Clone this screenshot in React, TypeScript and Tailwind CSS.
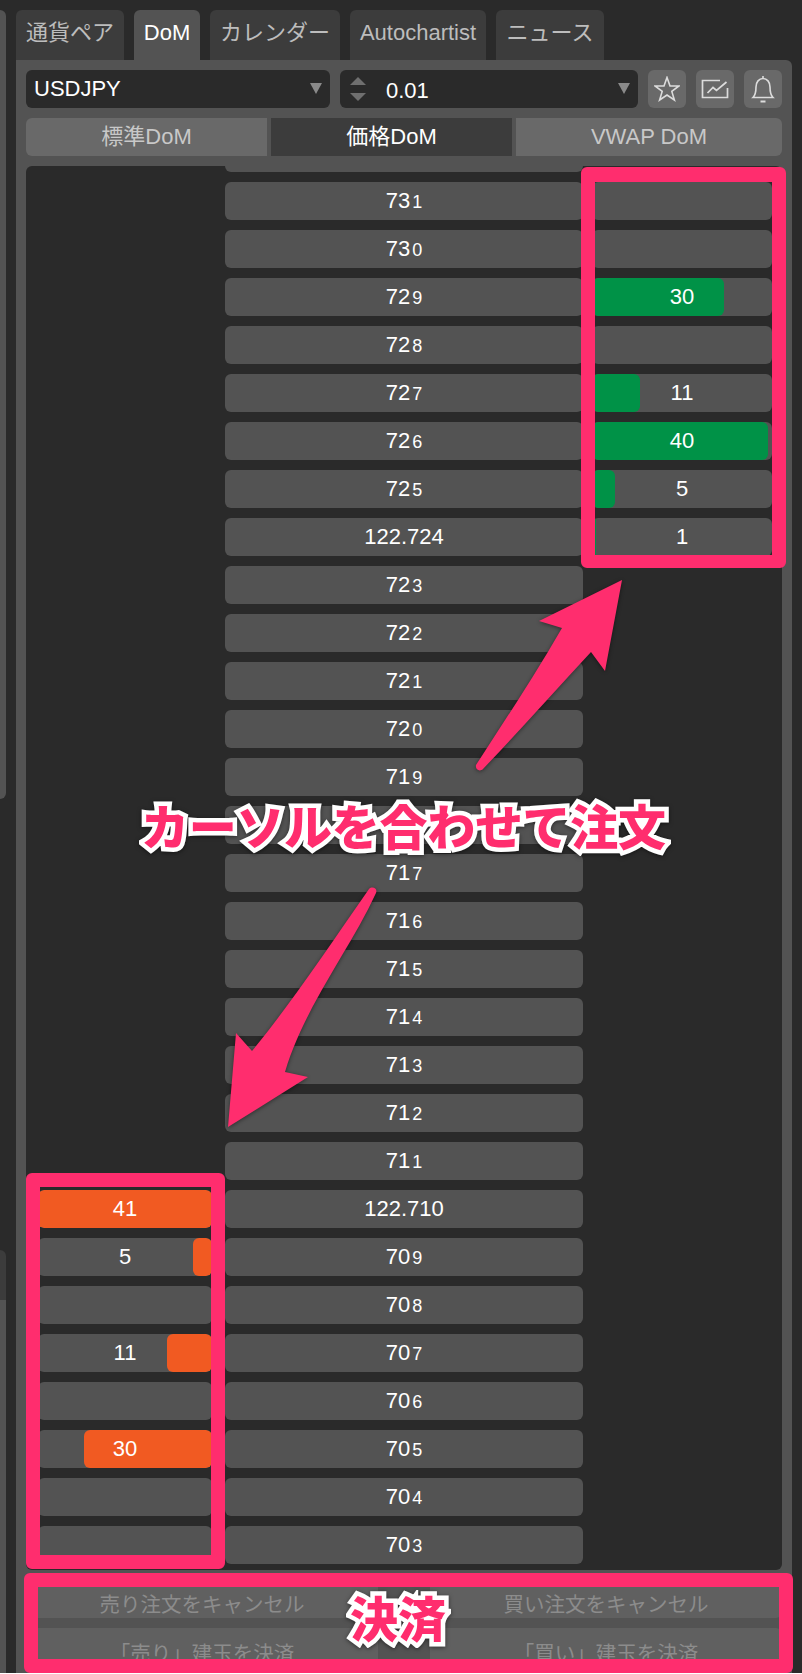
import React from 'react';

// --- DATA ---
const FIRST_PRICE = 732; // only its bottom edge shows, the label is scrolled away
const LAST_PRICE = 703;

// sizes shown in the buy column (green, grows from the left)
const BUY_SIZES: Record<number, { size?: number; bar?: number }> = {
  731: {},
  730: {},
  729: { size: 30, bar: 132 },
  728: {},
  727: { size: 11, bar: 48 },
  726: { size: 40, bar: 176 },
  725: { size: 5, bar: 23 },
  724: { size: 1, bar: 4 },
};

// sizes shown in the sell column (orange, grows from the right)
const SELL_SIZES: Record<number, { size?: number; bar?: number }> = {
  710: { size: 41, bar: 174 },
  709: { size: 5, bar: 19 },
  708: {},
  707: { size: 11, bar: 45 },
  706: {},
  705: { size: 30, bar: 128 },
  704: {},
  703: {},
};

const FULL_PRICES = [724, 710];

const prices: number[] = [];
for (let p = FIRST_PRICE; p >= LAST_PRICE; p--) prices.push(p);

const TABS = [
  { label: '通貨ペア', width: 'w-[108px]', active: false },
  { label: 'DoM', width: 'w-[66px]', active: true },
  { label: 'カレンダー', width: 'w-[130px]', active: false },
  { label: 'Autochartist', width: 'w-[136px]', active: false },
  { label: 'ニュース', width: 'w-[108px]', active: false },
];

// --- ICONS ---
const Triangle = ({ down = true, className }: { down?: boolean; className: string }) => (
  <svg viewBox="0 0 12 11" preserveAspectRatio="none" className={className}>
    <polygon points={down ? '0,0 12,0 6,11' : '6,0 12,11 0,11'} fill="currentColor" />
  </svg>
);

const StarIcon = () => (
  <svg viewBox="0 0 26 26" className="w-[26px] h-[26px] text-[#dcdcdc]" fill="none" stroke="currentColor" strokeWidth="1.6">
    <polygon points="13,1.5 16,10 25,10 17.8,15.4 20.4,24 13,19 5.6,24 8.2,15.4 1,10 10,10" strokeLinejoin="miter" />
  </svg>
);

const ChartIcon = () => (
  <svg viewBox="0 0 28 20" className="w-[28px] h-[20px] text-[#dcdcdc]" fill="none" stroke="currentColor" strokeWidth="1.7">
    <path d="M19 1.5H1.5V18.5H26.5V9" />
    <path d="M6.5 14L12 8.5L15.5 11.5L25.5 3" />
  </svg>
);

const BellIcon = () => (
  <svg viewBox="0 0 24 28" className="w-[24px] h-[28px] text-[#dcdcdc]" fill="none" stroke="currentColor" strokeWidth="1.6">
    <path d="M12 1V3.5" />
    <path d="M2 22.5C4.5 20 5 18 5 12C5 7 8 3.5 12 3.5C16 3.5 19 7 19 12C19 18 19.5 20 22 22.5Z" />
    <path d="M9.5 26.5H14.5" strokeWidth="2" />
  </svg>
);

// --- ROWS ---
const PriceLabel = ({ price }: { price: number }) => {
  if (price === FIRST_PRICE) return null;
  if (FULL_PRICES.includes(price)) return <span>122.{price}</span>;
  const text = String(price);
  return (
    <span>
      {text.slice(0, 2)}
      <span className="ml-[2px] text-[18px]">{text.slice(2)}</span>
    </span>
  );
};

const SizeCell = ({ cell, side }: { cell: { size?: number; bar?: number }; side: 'buy' | 'sell' }) => (
  <div className="relative h-[38px] rounded-[6px] bg-[#535353] overflow-hidden flex items-center justify-center text-white">
    {cell.bar ? (
      <div
        className={side === 'buy' ? 'absolute left-0 top-0 bottom-0 rounded-[6px] bg-[#009247]' : 'absolute right-0 top-0 bottom-0 rounded-[6px] bg-[#f15a22]'}
        style={{ width: cell.bar }}
      />
    ) : null}
    <span className="relative">{cell.size}</span>
  </div>
);

const LadderRow = ({ price }: { price: number }) => (
  <div className="flex h-[38px] shrink-0">
    <div className="w-[174px]">{SELL_SIZES[price] && <SizeCell cell={SELL_SIZES[price]} side="sell" />}</div>
    <div className="ml-[13px] w-[358px] h-[38px] rounded-[6px] bg-[#535353] flex items-center justify-center text-white">
      <PriceLabel price={price} />
    </div>
    <div className="ml-[9px] w-[180px]">{BUY_SIZES[price] && <SizeCell cell={BUY_SIZES[price]} side="buy" />}</div>
  </div>
);

const ANNOTATION_TEXT =
  "absolute font-black text-[#ff2d6e] whitespace-nowrap [-webkit-text-stroke:9px_white] [paint-order:stroke_fill] [filter:drop-shadow(0_1px_2px_rgba(0,0,0,0.5))]";

// --- PAGE ---
export default function App() {
  return (
    <div className="relative w-[802px] h-[1673px] bg-[#2a2a2a] overflow-hidden flex text-[22px] leading-none text-white font-['Liberation_Sans','Noto_Sans_CJK_JP',sans-serif]">
      {/* neighbouring panels peeking in on the left */}
      <div className="w-[6px] mr-[10px] pt-[10px] flex flex-col shrink-0">
        <div className="h-[789px] rounded-r-[6px] bg-[#535353]" />
        <div className="mt-[451px] h-[50px] rounded-tr-[6px] bg-[#3c3c3c]" />
        <div className="flex-1 bg-[#535353]" />
      </div>

      <div className="w-[776px] pt-[10px] flex flex-col">
        {/* tabs */}
        <div className="flex gap-[10px] h-[50px] shrink-0">
          {TABS.map(tab => (
            <div
              key={tab.label}
              className={`${tab.width} rounded-t-[6px] flex items-center justify-center pb-[4px] ${tab.active ? 'bg-[#535353] text-white' : 'bg-[#3c3c3c] text-[#bdbdbd]'}`}
            >
              {tab.label}
            </div>
          ))}
        </div>

        <div className="flex-1 min-h-0 bg-[#535353] rounded-tr-[6px] pt-[10px] px-[10px] flex flex-col">
          {/* symbol + step */}
          <div className="flex h-[38px] shrink-0">
            <div className="w-[304px] rounded-[6px] bg-[#2a2a2a] pl-[8px] pr-[8px] flex items-center justify-between">
              <span>USDJPY</span>
              <Triangle className="w-[12px] h-[11px] text-[#8a8a8a] -mt-[2px]" />
            </div>
            <div className="ml-[10px] w-[298px] rounded-[6px] bg-[#2a2a2a] pl-[10px] pr-[8px] flex items-center">
              <div className="flex flex-col gap-[8px] w-[16px]">
                <Triangle down={false} className="w-[16px] h-[8px] text-[#6f6f6f]" />
                <Triangle className="w-[16px] h-[8px] text-[#6f6f6f]" />
              </div>
              <span className="ml-[20px] mt-[3px]">0.01</span>
              <Triangle className="ml-auto w-[12px] h-[11px] text-[#8a8a8a] -mt-[2px]" />
            </div>
            <div className="ml-[10px] w-[38px] rounded-[6px] bg-[#696969] flex items-center justify-center"><StarIcon /></div>
            <div className="ml-[10px] w-[38px] rounded-[6px] bg-[#696969] flex items-center justify-center"><ChartIcon /></div>
            <div className="ml-[10px] w-[38px] rounded-[6px] bg-[#696969] flex items-center justify-center"><BellIcon /></div>
          </div>

          {/* DoM type */}
          <div className="mt-[10px] flex gap-[4px] h-[38px] shrink-0">
            <div className="w-[241px] rounded-l-[6px] bg-[#696969] text-[#c8c8c8] flex items-center justify-center">標準DoM</div>
            <div className="w-[241px] bg-[#3c3c3c] text-white flex items-center justify-center">価格DoM</div>
            <div className="w-[266px] rounded-r-[6px] bg-[#696969] text-[#c8c8c8] flex items-center justify-center">VWAP DoM</div>
          </div>

          {/* ladder */}
          <div className="mt-[10px] h-[1404px] shrink-0 rounded-[6px] bg-[#2a2a2a] overflow-hidden pl-[12px]">
            <div className="-mt-[32px] flex flex-col gap-[10px]">
              {prices.map(price => (
                <LadderRow key={price} price={price} />
              ))}
            </div>
          </div>

          {/* footer buttons */}
          <div className="mt-[10px] grid grid-cols-2 gap-x-[52px] gap-y-[10px] text-[20.5px] text-[#8c8c8c]">
            <div className="h-[38px] rounded-[6px] bg-[#606060] flex justify-center pt-[15px] overflow-hidden">売り注文をキャンセル</div>
            <div className="h-[38px] rounded-[6px] bg-[#606060] flex justify-center pt-[15px] overflow-hidden">買い注文をキャンセル</div>
            <div className="h-[45px] rounded-[6px] bg-[#606060] flex justify-center pt-[16px]">「売り」建玉を決済</div>
            <div className="h-[45px] rounded-[6px] bg-[#606060] flex justify-center pt-[16px]">「買い」建玉を決済</div>
          </div>
        </div>
      </div>

      {/* annotation frames */}
      <div className="absolute left-[581px] top-[167px] w-[205px] h-[401px] rounded-[6px] border-x-[14px] border-t-[15px] border-b-[13px] border-[#ff2d6e]" />
      <div className="absolute left-[26px] top-[1173px] w-[199px] h-[396px] rounded-[6px] border-[14px] border-[#ff2d6e]" />
      <div className="absolute left-[24px] top-[1573px] w-[769px] h-[100px] rounded-[6px] border-[14px] border-[#ff2d6e]" />

      {/* annotation arrows */}
      <svg className="absolute left-0 top-0 w-[802px] h-[1673px] pointer-events-none [filter:drop-shadow(0_1px_2px_rgba(0,0,0,0.45))]" viewBox="0 0 802 1673">
        <path
          d="M622 580L605 671L591 652C556 690 520 730 483 769C480 772 475 770 476 765C505 720 535 675 562 628L539 621Z"
          fill="#ff2d6e"
        />
        <path
          d="M376 893C350 950 305 1005 285 1072L308 1077L228 1127L236 1033L252 1051C290 1005 330 945 369 889C372 886 378 888 376 893Z"
          fill="#ff2d6e"
        />
      </svg>

      {/* annotation labels */}
      <div className={`${ANNOTATION_TEXT} left-[141px] top-[801px] text-[48px] leading-[56px] tracking-[-0.3px]`}>カーソルを合わせて注文</div>
      <div className={`${ANNOTATION_TEXT} left-[350px] top-[1593px] text-[48px] leading-[56px]`}>決済</div>
    </div>
  );
}
